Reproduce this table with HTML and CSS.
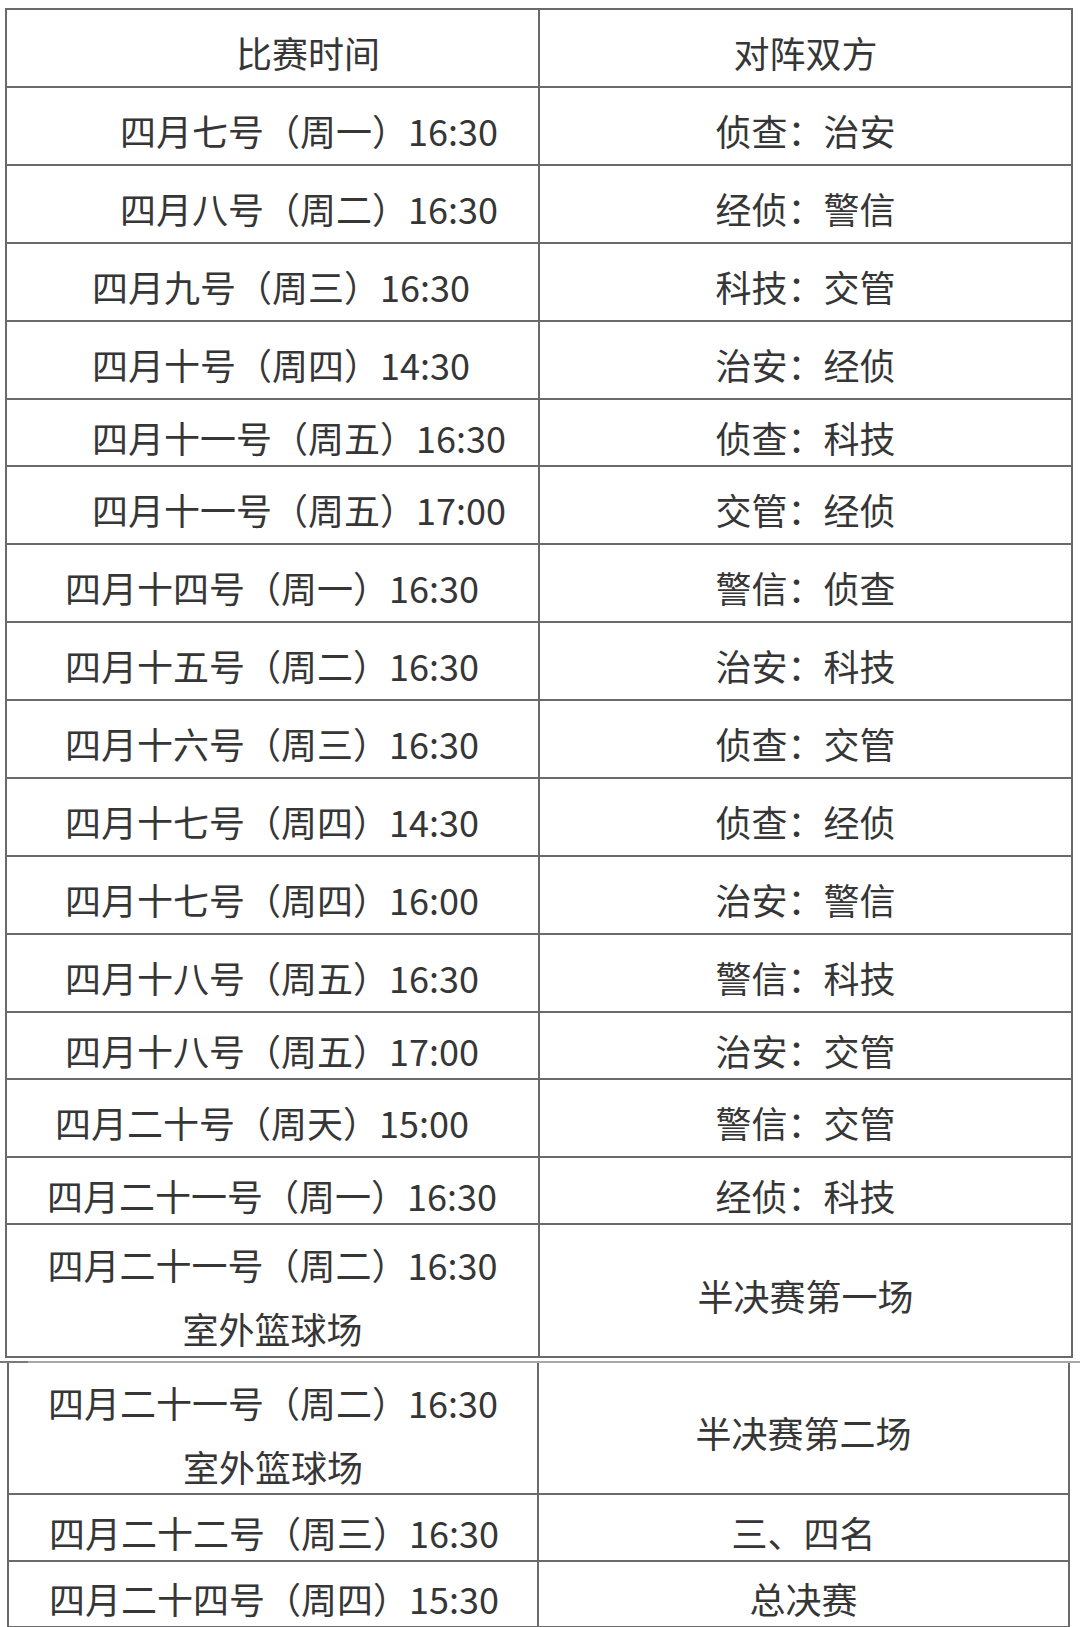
FILE: index.html
```html
<!DOCTYPE html>
<html lang="zh-CN">
<head>
<meta charset="utf-8">
<title>比赛时间安排</title>
<link rel="stylesheet" href="styles.css">
</head>
<body>
<div class="sheet first">
  <div class="row">
    <div class="cell when head">比赛时间</div>
    <div class="cell vs">对阵双方</div>
  </div>
  <div class="row">
    <div class="cell when i1">四月七号（周一）16:30</div>
    <div class="cell vs">侦查：治安</div>
  </div>
  <div class="row">
    <div class="cell when i1">四月八号（周二）16:30</div>
    <div class="cell vs">经侦：警信</div>
  </div>
  <div class="row">
    <div class="cell when i2">四月九号（周三）16:30</div>
    <div class="cell vs">科技：交管</div>
  </div>
  <div class="row">
    <div class="cell when i2">四月十号（周四）14:30</div>
    <div class="cell vs">治安：经侦</div>
  </div>
  <div class="row short">
    <div class="cell when i2">四月十一号（周五）16:30</div>
    <div class="cell vs">侦查：科技</div>
  </div>
  <div class="row">
    <div class="cell when i2">四月十一号（周五）17:00</div>
    <div class="cell vs">交管：经侦</div>
  </div>
  <div class="row">
    <div class="cell when i3">四月十四号（周一）16:30</div>
    <div class="cell vs">警信：侦查</div>
  </div>
  <div class="row">
    <div class="cell when i3">四月十五号（周二）16:30</div>
    <div class="cell vs">治安：科技</div>
  </div>
  <div class="row">
    <div class="cell when i3">四月十六号（周三）16:30</div>
    <div class="cell vs">侦查：交管</div>
  </div>
  <div class="row">
    <div class="cell when i3">四月十七号（周四）14:30</div>
    <div class="cell vs">侦查：经侦</div>
  </div>
  <div class="row">
    <div class="cell when i3">四月十七号（周四）16:00</div>
    <div class="cell vs">治安：警信</div>
  </div>
  <div class="row">
    <div class="cell when i3">四月十八号（周五）16:30</div>
    <div class="cell vs">警信：科技</div>
  </div>
  <div class="row short">
    <div class="cell when i3">四月十八号（周五）17:00</div>
    <div class="cell vs">治安：交管</div>
  </div>
  <div class="row">
    <div class="cell when i4">四月二十号（周天）15:00</div>
    <div class="cell vs">警信：交管</div>
  </div>
  <div class="row short">
    <div class="cell when i5">四月二十一号（周一）16:30</div>
    <div class="cell vs">经侦：科技</div>
  </div>
  <div class="row double">
    <div class="cell when stack"><span>四月二十一号（周二）16:30</span><span>室外篮球场</span></div>
    <div class="cell vs">半决赛第一场</div>
  </div>
</div>
<div class="seam"></div>
<div class="sheet second">
  <div class="row double">
    <div class="cell when stack"><span>四月二十一号（周二）16:30</span><span>室外篮球场</span></div>
    <div class="cell vs">半决赛第二场</div>
  </div>
  <div class="row short">
    <div class="cell when i6">四月二十二号（周三）16:30</div>
    <div class="cell vs">三、四名</div>
  </div>
  <div class="row short last">
    <div class="cell when i6">四月二十四号（周四）15:30</div>
    <div class="cell vs">总决赛</div>
  </div>
</div>
</body>
</html>
```

FILE: styles.css
```css
html, body {
  margin: 0;
  padding: 0;
  background: #ffffff;
}

body {
  font-family: "Noto Sans CJK SC", "Noto Sans", sans-serif;
  color: #363636;
}

.sheet {
  box-sizing: border-box;
  border-left: 2px solid #6a6a6a;
  border-right: 2px solid #6a6a6a;
}

.first {
  margin: 8px 7px 0 5px;
  border-top: 2px solid #6a6a6a;
}

.second {
  margin: 0 10px 0 7px;
}

.seam {
  height: 2px;
  margin-top: 3px;
  background: linear-gradient(to right, #7a7a7a 0, #7a7a7a 28px, #a8a8a8 28px, #a8a8a8 100%);
}

.row {
  display: flex;
  box-sizing: border-box;
  height: 78px;
  border-bottom: 2px solid #6a6a6a;
}

.row.short {
  height: 67px;
}

.row.double {
  height: 133px;
}

.second .row.double {
  height: 132px;
}

.second .row.last {
  height: 66px;
}

.cell {
  display: flex;
  align-items: center;
  box-sizing: border-box;
  font-size: 36px;
  line-height: 64px;
  padding-top: 8px;
  white-space: nowrap;
}

.when {
  width: 533px;
  border-right: 2px solid #6a6a6a;
}

.second .when {
  width: 530px;
}

.vs {
  flex: 1;
  justify-content: center;
}

.head { padding-left: 229px; }
.i1 { padding-left: 113px; }
.i2 { padding-left: 85px; }
.i3 { padding-left: 58px; }
.i4 { padding-left: 48px; }
.i5 { padding-left: 40px; }
.i6 { padding-left: 40px; }

.stack {
  flex-direction: column;
  justify-content: center;
  padding-top: 11px;
}
```
